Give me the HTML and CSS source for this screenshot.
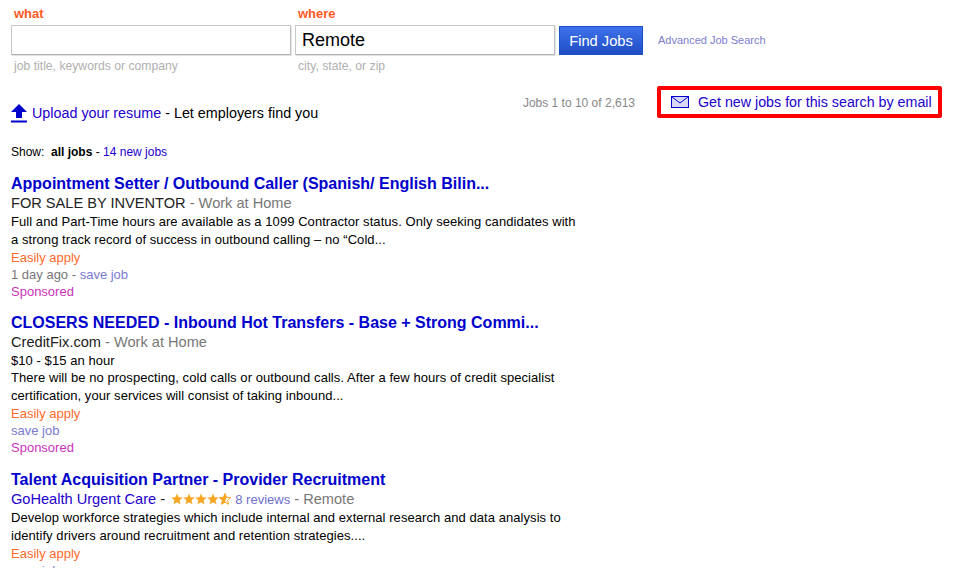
FILE: index.html
```html
<!DOCTYPE html>
<html lang="en">
<head>
<meta charset="utf-8">
<title>Jobs</title>
<link rel="stylesheet" href="styles.css">
</head>
<body>
<form class="search">
  <div class="field field-what">
    <label class="field-label">what</label>
    <input class="field-input" type="text">
    <span class="field-hint">job title, keywords or company</span>
  </div>
  <div class="field field-where">
    <label class="field-label">where</label>
    <input class="field-input" type="text" value="Remote">
    <span class="field-hint">city, state, or zip</span>
  </div>
  <button class="find" type="button">Find Jobs</button>
  <a class="advanced" href="#">Advanced Job Search</a>
</form>

<div class="summary">
  <div class="upload">
    <svg class="upload-icon" width="16" height="19" viewBox="0 0 16 19"><path d="M8 0 16 8H11V14H5V8H0Z" fill="#0000cc"/><rect y="16.500" width="16" height="2" fill="#0000cc"/></svg>
    <a class="link" href="#">Upload your resume</a><span class="upload-rest"> - Let employers find you</span>
  </div>
  <div class="count">Jobs 1 to 10 of 2,613</div>
  <a class="alert" href="#">
    <svg class="alert-icon" width="18" height="12" viewBox="0 0 18 12"><rect x=".5" y=".5" width="17" height="11" fill="#d8d8f2" stroke="#0000cc"/><path d="M.5 .5 9 7 17.500 .5" fill="none" stroke="#0000cc"/></svg>
    <span>Get new jobs for this search by email</span>
  </a>
</div>

<div class="show">Show: &nbsp;<b>all jobs</b> - <a class="link" href="#">14 new jobs</a></div>

<div class="job">
  <a class="job-title" href="#">Appointment Setter / Outbound Caller (Spanish/ English Bilin...</a>
  <div class="job-company">FOR SALE BY INVENTOR <span class="muted">- Work at Home</span></div>
  <div class="job-text">Full and Part-Time hours are available as a 1099 Contractor status. Only seeking candidates with<br>a strong track record of success in outbound calling – no “Cold...</div>
  <div class="job-apply">Easily apply</div>
  <div class="job-meta"><span class="muted">1 day ago - </span><a class="save" href="#">save job</a></div>
  <div class="job-sponsored">Sponsored</div>
</div>

<div class="job job-with-salary">
  <a class="job-title" href="#">CLOSERS NEEDED - Inbound Hot Transfers - Base + Strong Commi...</a>
  <div class="job-company">CreditFix.com <span class="muted">- Work at Home</span></div>
  <div class="job-salary">$10 - $15 an hour</div>
  <div class="job-text">There will be no prospecting, cold calls or outbound calls. After a few hours of credit specialist<br>certification, your services will consist of taking inbound...</div>
  <div class="job-apply">Easily apply</div>
  <div class="job-meta"><a class="save" href="#">save job</a></div>
  <div class="job-sponsored">Sponsored</div>
</div>

<div class="job">
  <a class="job-title" href="#">Talent Acquisition Partner - Provider Recruitment</a>
  <div class="job-company"><a class="company-link" href="#">GoHealth Urgent Care</a> -
    <svg class="stars" width="60" height="12" viewBox="0 0 60 12"><defs><path id="star" d="M6 .5 7.600 4.300 11.700 4.600 8.600 7.300 9.500 11.300 6 9.200 2.500 11.300 3.400 7.300 .3 4.600 4.400 4.300Z"/></defs><g fill="#f6a623"><use href="#star"/><use href="#star" x="12"/><use href="#star" x="24"/><use href="#star" x="36"/></g><use href="#star" x="48" fill="none" stroke="#f6a623"/><path d="M54 .5 55.600 4.300 54 9.200 50.500 11.300 51.400 7.300 48.300 4.600 52.400 4.300Z" fill="#f6a623"/></svg>
    <a class="reviews" href="#">8 reviews</a> <span class="muted">- Remote</span></div>
  <div class="job-text">Develop workforce strategies which include internal and external research and data analysis to<br>identify drivers around recruitment and retention strategies....</div>
  <div class="job-apply">Easily apply</div>
  <div class="job-meta"><a class="save" href="#">save job</a></div>
</div>
</body>
</html>
```
FILE: styles.css
```css
html, body { margin: 0; height: 568px; overflow: hidden; background: #fff; }
body { font-family: "Liberation Sans", Arial, sans-serif; color: #000; position: relative; }
a { text-decoration: none; }

.search { display: flex; align-items: flex-start; padding: 6px 0 0 11px; height: 69px; }
.field { display: flex; flex-direction: column; }
.field-what { width: 280px; margin-right: 4px; }
.field-where { width: 260px; margin-right: 4px; }
.field-label { font-size: 13px; font-weight: bold; color: #ff5a1f; line-height: 15px; padding-left: 3px; margin-bottom: 4px; }
.field-input { box-sizing: border-box; width: 100%; height: 30px; border: 1px solid #c8c8c8; border-bottom-color: #b0b0b0; border-right-color: #c0c0c0; box-shadow: 1px 1px 0 #e4e4e4; padding: 0 6px; font: 18px "Liberation Sans", Arial, sans-serif; color: #000; background: #fff; outline: none; }
.field-hint { font-size: 12.2px; color: #b0b0b0; line-height: 14px; margin-top: 4px; padding-left: 3px; }
.find { box-sizing: border-box; margin-top: 20px; width: 84px; height: 29px; padding: 0; border: 1px solid #1c50c8; background: linear-gradient(#3e72ec, #1f4dc4); color: #fff; font: 14.7px "Liberation Sans", Arial, sans-serif; }
.advanced { margin: 28px 0 0 15px; font-size: 11px; line-height: 13px; color: #7c7cd0; }

.summary { display: flex; align-items: flex-start; padding-left: 11px; height: 70px; }
.upload { width: 500px; margin-top: 29px; display: flex; align-items: center; font-size: 14.35px; line-height: 19px; white-space: pre; }
.upload-icon { margin-right: 5px; flex: none; }
.link { color: #2200cc; }
.count { width: 124px; margin-top: 21px; font-size: 12px; line-height: 14px; color: #888; text-align: right; white-space: nowrap; }
.alert { box-sizing: border-box; margin: 11px 0 0 22px; width: 285px; height: 32px; border: 4px solid #f00; border-radius: 2px; display: flex; align-items: center; padding-left: 10px; font-size: 14.25px; color: #2200cc; white-space: nowrap; }
.alert-icon { margin-right: 9px; flex: none; }

.show { padding-left: 11px; font-size: 12px; line-height: 14px; height: 30px; }

.job { padding-left: 11px; margin-bottom: 14px; white-space: nowrap; }
.job-with-salary { margin-bottom: 15px; }
.job-title { display: block; font-size: 16px; font-weight: bold; line-height: 18px; color: #0000cc; margin-bottom: 1px; }
.job-company { font-size: 14.6px; line-height: 19px; color: #222; }
.muted { color: #777; }
.company-link { color: #2200cc; }
.reviews { color: #7070cc; font-size: 13px; }
.stars { vertical-align: -1px; margin: 0 0 0 2px; }
.job-salary, .job-text { font-size: 13px; line-height: 18px; letter-spacing: .06px; }
.job-salary { line-height: 17px; }
.job-apply, .job-meta, .job-sponsored { font-size: 13px; line-height: 17px; }
.job-apply { color: #ff6a2a; }
.save { color: #7a7ad0; }
.job-sponsored { color: #cc33bb; }
```
